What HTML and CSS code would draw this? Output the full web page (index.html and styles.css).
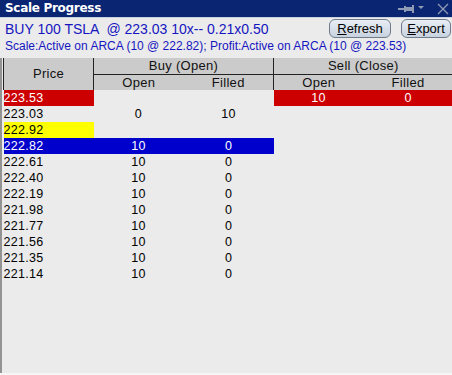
FILE: index.html
```html
<!DOCTYPE html>
<html>
<head>
<meta charset="utf-8">
<link rel="stylesheet" href="styles.css">
</head>
<body>
<div class="window">
  <div class="titlebar">
    <span class="title">Scale Progress</span>
    <div class="tools">
      <svg class="pin" width="16" height="8" viewBox="0 0 16 8">
        <rect x="0" y="3" width="7" height="2" fill="#8f9bb5"/>
        <rect x="6" y="1" width="2" height="6" fill="#8f9bb5"/>
        <rect x="8" y="2" width="6" height="4" fill="#8f9bb5"/>
        <rect x="14" y="0" width="2" height="8" fill="#8f9bb5"/>
      </svg>
      <svg class="drop" width="6" height="4" viewBox="0 0 6 4">
        <polygon points="0,0 6,0 3,3" fill="#8f9bb5"/>
      </svg>
      <svg class="close" width="12" height="12" viewBox="0 0 12 12">
        <path d="M1 1 L11 11 M11 1 L1 11" stroke="#8f9bb5" stroke-width="1.3" fill="none"/>
      </svg>
    </div>
  </div>
  <div class="info">
    <div class="info-top">
      <div class="line1">BUY 100 TSLA &nbsp;@ 223.03 10x-- 0.21x0.50</div>
      <div class="buttons">
        <button class="btn btn-refresh"><u>R</u>efresh</button>
        <button class="btn btn-export"><u>E</u>xport</button>
      </div>
    </div>
    <div class="line2">Scale:Active on ARCA (10 @ 222.82); Profit:Active on ARCA (10 @ 223.53)</div>
  </div>
  <div class="grid-area">
    <table class="grid">
      <colgroup>
        <col class="c-price"><col class="c-sub"><col class="c-sub"><col class="c-sub"><col class="c-last">
      </colgroup>
      <thead>
        <tr class="h1">
          <th rowspan="2" class="h-price">Price</th>
          <th colspan="2" class="h-group">Buy (Open)</th>
          <th colspan="2" class="h-group">Sell (Close)</th>
        </tr>
        <tr class="h2">
          <th class="h-sub">Open</th>
          <th class="h-sub">Filled</th>
          <th class="h-sub h-sep">Open</th>
          <th class="h-sub">Filled</th>
        </tr>
      </thead>
      <tbody>
        <tr><td class="price red">223.53</td><td></td><td></td><td class="red">10</td><td class="red">0</td></tr>
        <tr><td class="price">223.03</td><td>0</td><td>10</td><td></td><td></td></tr>
        <tr><td class="price yellow">222.92</td><td></td><td></td><td></td><td></td></tr>
        <tr><td class="price blue">222.82</td><td class="blue">10</td><td class="blue">0</td><td></td><td></td></tr>
        <tr><td class="price">222.61</td><td>10</td><td>0</td><td></td><td></td></tr>
        <tr><td class="price">222.40</td><td>10</td><td>0</td><td></td><td></td></tr>
        <tr><td class="price">222.19</td><td>10</td><td>0</td><td></td><td></td></tr>
        <tr><td class="price">221.98</td><td>10</td><td>0</td><td></td><td></td></tr>
        <tr><td class="price">221.77</td><td>10</td><td>0</td><td></td><td></td></tr>
        <tr><td class="price">221.56</td><td>10</td><td>0</td><td></td><td></td></tr>
        <tr><td class="price">221.35</td><td>10</td><td>0</td><td></td><td></td></tr>
        <tr><td class="price">221.14</td><td>10</td><td>0</td><td></td><td></td></tr>
      </tbody>
    </table>
  </div>
</div>
</body>
</html>
```

FILE: styles.css
```css
html, body {
  margin: 0;
  padding: 0;
  background: #ebebeb;
}
body {
  width: 452px;
  height: 375px;
  overflow: hidden;
  font-family: "Liberation Sans", Arial, sans-serif;
}
.window {
  width: 452px;
  height: 375px;
  display: flex;
  flex-direction: column;
  background: #ebebeb;
  box-sizing: border-box;
  border-bottom: 2px solid #f6f6f6;
}
.titlebar {
  height: 17px;
  background: #0a2572;
  border-bottom: 1px solid #c9d0de;
  display: flex;
  align-items: center;
  justify-content: space-between;
  padding-left: 5px;
  padding-right: 3px;
  flex-shrink: 0;
}
.title {
  color: #ffffff;
  font-family: "DejaVu Sans", Verdana, sans-serif;
  font-weight: bold;
  font-size: 12px;
  letter-spacing: -0.3px;
  line-height: 17px;
}
.tools {
  display: flex;
  align-items: center;
  height: 17px;
}
.pin { margin-right: 4px; margin-top: 1px; }
.drop { margin-right: 13px; margin-top: -1px; }
.info {
  padding: 0 0 0 5px;
  flex-shrink: 0;
}
.info-top {
  display: flex;
  justify-content: space-between;
  align-items: flex-start;
  height: 21px;
}
.line1 {
  color: #1616c0;
  font-size: 14px;
  line-height: 16px;
  padding-top: 3px;
}
.buttons {
  display: flex;
  gap: 10px;
  padding-top: 1px;
  padding-right: 1px;
}
.btn {
  height: 19px;
  border: 1px solid #6f7a8a;
  border-radius: 6px;
  background: linear-gradient(#e9eef5, #c8d2df);
  font-family: "Liberation Sans", Arial, sans-serif;
  font-size: 13px;
  color: #000;
  padding: 0;
  line-height: 17px;
}
.btn u { text-decoration-thickness: 1px; text-underline-offset: 1px; }
.btn-refresh { width: 62px; }
.btn-export { width: 50px; }
.line2 {
  color: #1616c0;
  font-size: 12px;
  line-height: 14px;
  height: 19px;
}
.grid-area {
  flex: 1;
  padding-left: 1px;
  border-left: 2px solid #939393;
}
.grid {
  border-collapse: collapse;
  table-layout: fixed;
  width: 449px;
  font-size: 12.5px;
  color: #000;
}
.c-price { width: 90px; }
.c-sub { width: 90px; }
.c-last { width: 89px; }
.grid th {
  background: #cbcbcb;
  font-weight: normal;
  font-size: 13px;
  letter-spacing: 0.3px;
  color: #111;
  padding: 0;
  height: 16px;
  line-height: 16px;
}
.h-price {
  border-left: 1px solid #222;
  border-right: 1px solid #222;
}
.h-group {
  border-bottom: 1px solid #222;
  border-right: 1px solid #222;
}
.h-group:last-child { border-right: 0; }
.h-sep { border-left: 1px solid #222; }
.h2 th { height: 15px; line-height: 15px; }
.grid td {
  height: 16px;
  line-height: 16px;
  padding: 0;
  text-align: center;
  white-space: nowrap;
  letter-spacing: 0.3px;
}
.grid td.price {
  text-align: left;
}
.red { background: #cc0000; color: #fff; }
.yellow { background: #ffff00; color: #000; }
.blue { background: #0000cc; color: #fff; }
```
